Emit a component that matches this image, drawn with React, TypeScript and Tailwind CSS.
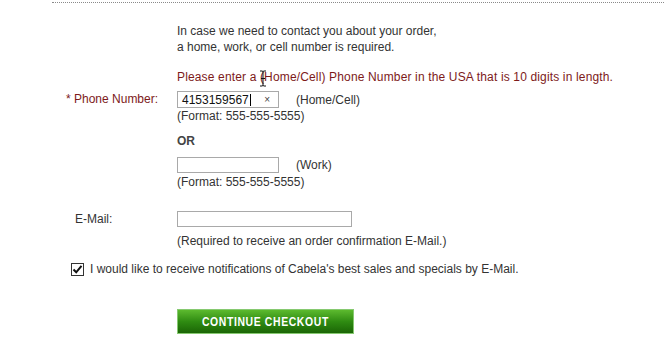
import React from 'react';

const font = { fontFamily: '"Liberation Sans", Arial, sans-serif' };

const App: React.FC = () => {
  return (
    <div className="relative w-[664px] h-[358px] bg-white text-[12px] leading-[16px] text-[#333]" style={font}>
      <div className="pt-[2px] pl-[52px]">
        <div className="border-t border-dotted border-[#8a8a8a]" />
      </div>

      <div className="pl-[177px] mt-[20px]">
        <p>In case we need to contact you about your order,</p>
        <p>a home, work, or cell number is required.</p>
        <p className="mt-[14px] text-[#7d1a1a] tracking-[0.15px]">
          Please enter a (Home/Cell) Phone Number in the USA that is 10 digits in length.
        </p>
      </div>

      <div className="flex mt-[6px]">
        <div className="w-[177px] pl-[66px] text-[#7d1a1a]">* Phone Number:</div>
        <div>
          <div className="flex items-center">
            <div className="w-[102px] h-[17px] border border-[#a9a9a9] flex items-center pl-[4px] pr-[8px] text-[#111]">
              <span>4153159567</span>
              <span className="w-px h-[12px] bg-black ml-[1px]" />
              <span className="ml-auto text-[10px] text-[#444]">×</span>
            </div>
            <span className="ml-[17px]">(Home/Cell)</span>
          </div>
          <p>(Format: 555-555-5555)</p>
          <p className="mt-[9px] font-bold text-[#444]">OR</p>
          <div className="flex items-center mt-[8px]">
            <div className="w-[102px] h-[16px] border border-[#a9a9a9]" />
            <span className="ml-[17px]">(Work)</span>
          </div>
          <p className="mt-[1px]">(Format: 555-555-5555)</p>
        </div>
      </div>

      <div className="flex mt-[21px]">
        <div className="w-[177px] pl-[75px]">E-Mail:</div>
        <div>
          <div className="w-[175px] h-[16px] border border-[#a9a9a9]" />
          <p className="mt-[6px]">(Required to receive an order confirmation E-Mail.)</p>
        </div>
      </div>

      <div className="flex items-center pl-[71px] mt-[12px]">
        <span className="w-[13px] h-[13px] border border-[#333] flex items-center justify-center bg-white">
          <svg width="11" height="11" viewBox="0 0 11 11">
            <path d="M1.5 5.5 L4.2 8.3 L9.5 1.8" fill="none" stroke="#111" strokeWidth="2" />
          </svg>
        </span>
        <span className="ml-[6px]">I would like to receive notifications of Cabela's best sales and specials by E-Mail.</span>
      </div>

      <div className="pl-[177px] mt-[32px]">
        <button className="w-[177px] h-[25px] border border-[#86c970] bg-gradient-to-b from-[#5cba2e] via-[#2f8c12] to-[#1b6606] flex items-center justify-center">
          <span className="inline-block scale-x-[0.8] text-white font-bold text-[13px] tracking-[0.8px] whitespace-nowrap">
            CONTINUE CHECKOUT
          </span>
        </button>
      </div>

      <svg className="absolute left-[259px] top-[70px]" width="8" height="17" viewBox="0 0 8 17">
        <path d="M1 1 H3 Q4 1 4 2 V15 Q4 16 5 16 H7 M7 1 H5 Q4 1 4 2 M4 15 Q4 16 3 16 H1 M2 8.5 H6" fill="none" stroke="#111" strokeWidth="1" />
      </svg>
    </div>
  );
};

export default App;
